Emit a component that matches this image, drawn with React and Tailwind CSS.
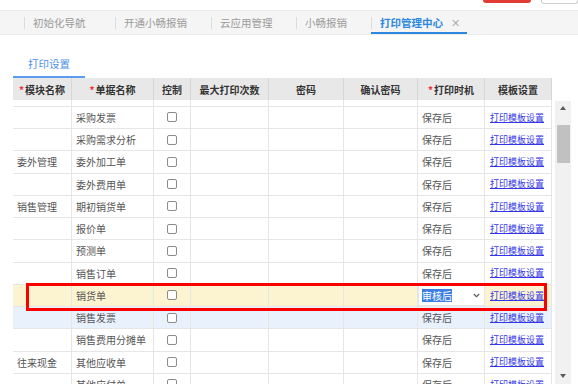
import React from "react";

const tabs = [
  { label: "初始化导航", w: "w-[91px]" },
  { label: "开通小畅报销", w: "w-[96px]" },
  { label: "云应用管理", w: "w-[85px]" },
  { label: "小畅报销", w: "w-[75px]" },
];

const headers = [
  { t: "模块名称", req: true },
  { t: "单据名称", req: true },
  { t: "控制" },
  { t: "最大打印次数" },
  { t: "密码" },
  { t: "确认密码" },
  { t: "打印时机", req: true },
  { t: "模板设置" },
];

// first row is scrolled mostly out of view, only its bottom edge shows
const rows = [
  { m: "", d: "", partial: true },
  { m: "", d: "采购发票" },
  { m: "", d: "采购需求分析" },
  { m: "委外管理", d: "委外加工单" },
  { m: "", d: "委外费用单" },
  { m: "销售管理", d: "期初销货单" },
  { m: "", d: "报价单" },
  { m: "", d: "预测单" },
  { m: "", d: "销售订单" },
  { m: "", d: "销货单", active: true },
  { m: "", d: "销售发票", hover: true },
  { m: "", d: "销售费用分摊单" },
  { m: "往来现金", d: "其他应收单" },
  { m: "", d: "其他应付单" },
];

const cols = "grid grid-cols-[59px_82px_37px_78px_75px_74px_67px_67px]";

function Row({ r }) {
  const bg = r.active ? "bg-[#fcf4d0]" : r.hover ? "bg-[#e8f1fc]" : "bg-white";
  const cell = "h-full border-r border-[#e6e6e6] flex items-center";
  return (
    <div className={`${cols} h-[22.25px] border-b border-[#e6e6e6] ${bg} text-[10px] text-[#555]`}>
      <div className={`${cell} pl-[4px]`}>{r.m}</div>
      <div className={`${cell} pl-[4px]`}>{r.d}</div>
      <div className={`${cell} justify-center`}>
        <span className="w-[10px] h-[10px] border border-[#8c8c8c] rounded-[2px] bg-white" />
      </div>
      <div className={cell} />
      <div className={cell} />
      <div className={cell} />
      {r.active ? (
        <div className={`${cell} border-[#a9a9a9] border bg-white pl-[3px] pr-[4px] justify-between`}>
          <span className="bg-[#3c7fe4] text-white leading-[13px]">审核后</span>
          <svg width="7" height="5" viewBox="0 0 7 5">
            <path d="M0.8 1 L3.5 3.7 L6.2 1" stroke="#555" strokeWidth="1.1" fill="none" />
          </svg>
        </div>
      ) : (
        <div className={`${cell} pl-[4px]`}>{r.partial ? "" : "保存后"}</div>
      )}
      <div className={`${cell} pl-[5px]`}>
        {!r.partial && <span className="text-[9px] text-[#3535e8] underline">打印模板设置</span>}
      </div>
    </div>
  );
}

export default function App() {
  return (
    <div className="relative w-[578px] h-[384px] overflow-hidden bg-white font-['Noto_Sans_CJK_SC','Noto_Sans',sans-serif]">
      {/* top buttons, cut off by the viewport */}
      <div className="h-[10px] flex items-start">
        <div className="ml-[483px] w-[51px] h-[3px] bg-[#e23b34] rounded-b-[3px]" />
        <div className="ml-[10px] w-[40px] h-[4px] border border-t-0 border-[#cfcfcf] rounded-b-[3px]" />
      </div>

      {/* page tabs */}
      <div className="h-[25px] bg-[#f5f5f5] border-y border-[#ececec] flex items-stretch pl-[24px] text-[10.5px]">
        {tabs.map((t) => (
          <div key={t.label} className={`${t.w} flex items-center text-[#9a9a9a]`}>
            <span className="w-px h-[12px] bg-[#dcdcdc]" />
            <span className="ml-[8px]">{t.label}</span>
          </div>
        ))}
        <div className="w-[96px] flex items-center relative text-[#2a88e0] font-bold">
          <span className="w-px h-[12px] bg-[#dcdcdc]" />
          <span className="ml-[8px]">打印管理中心</span>
          <span className="ml-[8px] text-[#b0b0b0] font-normal text-[11px]">✕</span>
          <span className="absolute left-0 right-0 bottom-[0px] h-[2px] bg-[#2a88e0]" />
        </div>
      </div>

      {/* sub tab */}
      <div className="pl-[13px] mt-[16px]">
        <div className="w-[72px] h-[27px] flex items-center justify-center text-[10.5px] text-[#4a8fe6] border-b-2 border-[#5b9cf0]">
          打印设置
        </div>
      </div>

      <div className="flex pl-[13px] h-[307px]">
        <div className="w-[539px] flex flex-col">
          <div className={`${cols} h-[22px] bg-[#e8e8e8] text-[10px] font-bold text-[#333]`}>
            {headers.map((h) => (
              <div key={h.t} className="border-r border-[#d7d7d7] flex items-center justify-center">
                {h.req && <span className="text-[#f03030] mr-[1px]">*</span>}
                {h.t}
              </div>
            ))}
          </div>
          <div className="flex-1 overflow-hidden">
            <div className="-mt-[15.5px]">
              {rows.map((r, i) => (
                <Row key={i} r={r} />
              ))}
            </div>
          </div>
        </div>

        {/* scrollbar */}
        <div className="ml-[3px] mt-[23px] w-[16px] bg-[#f1f1f1] flex flex-col">
          <div className="h-[14px] flex items-center justify-center">
            <span className="border-x-[3.5px] border-x-transparent border-b-[4px] border-b-[#5a5a5a]" />
          </div>
          <div className="mt-[10px] ml-[2px] w-[13px] h-[38px] bg-[#c1c1c1]" />
          <div className="mt-auto h-[16px] flex items-center justify-center pb-[2px]">
            <span className="border-x-[3.5px] border-x-transparent border-t-[4px] border-t-[#5a5a5a]" />
          </div>
        </div>
      </div>

      {/* annotation box */}
      <div className="absolute left-[26px] top-[283px] w-[521px] h-[28px] border-[3px] border-[#fa0000]" />
    </div>
  );
}
